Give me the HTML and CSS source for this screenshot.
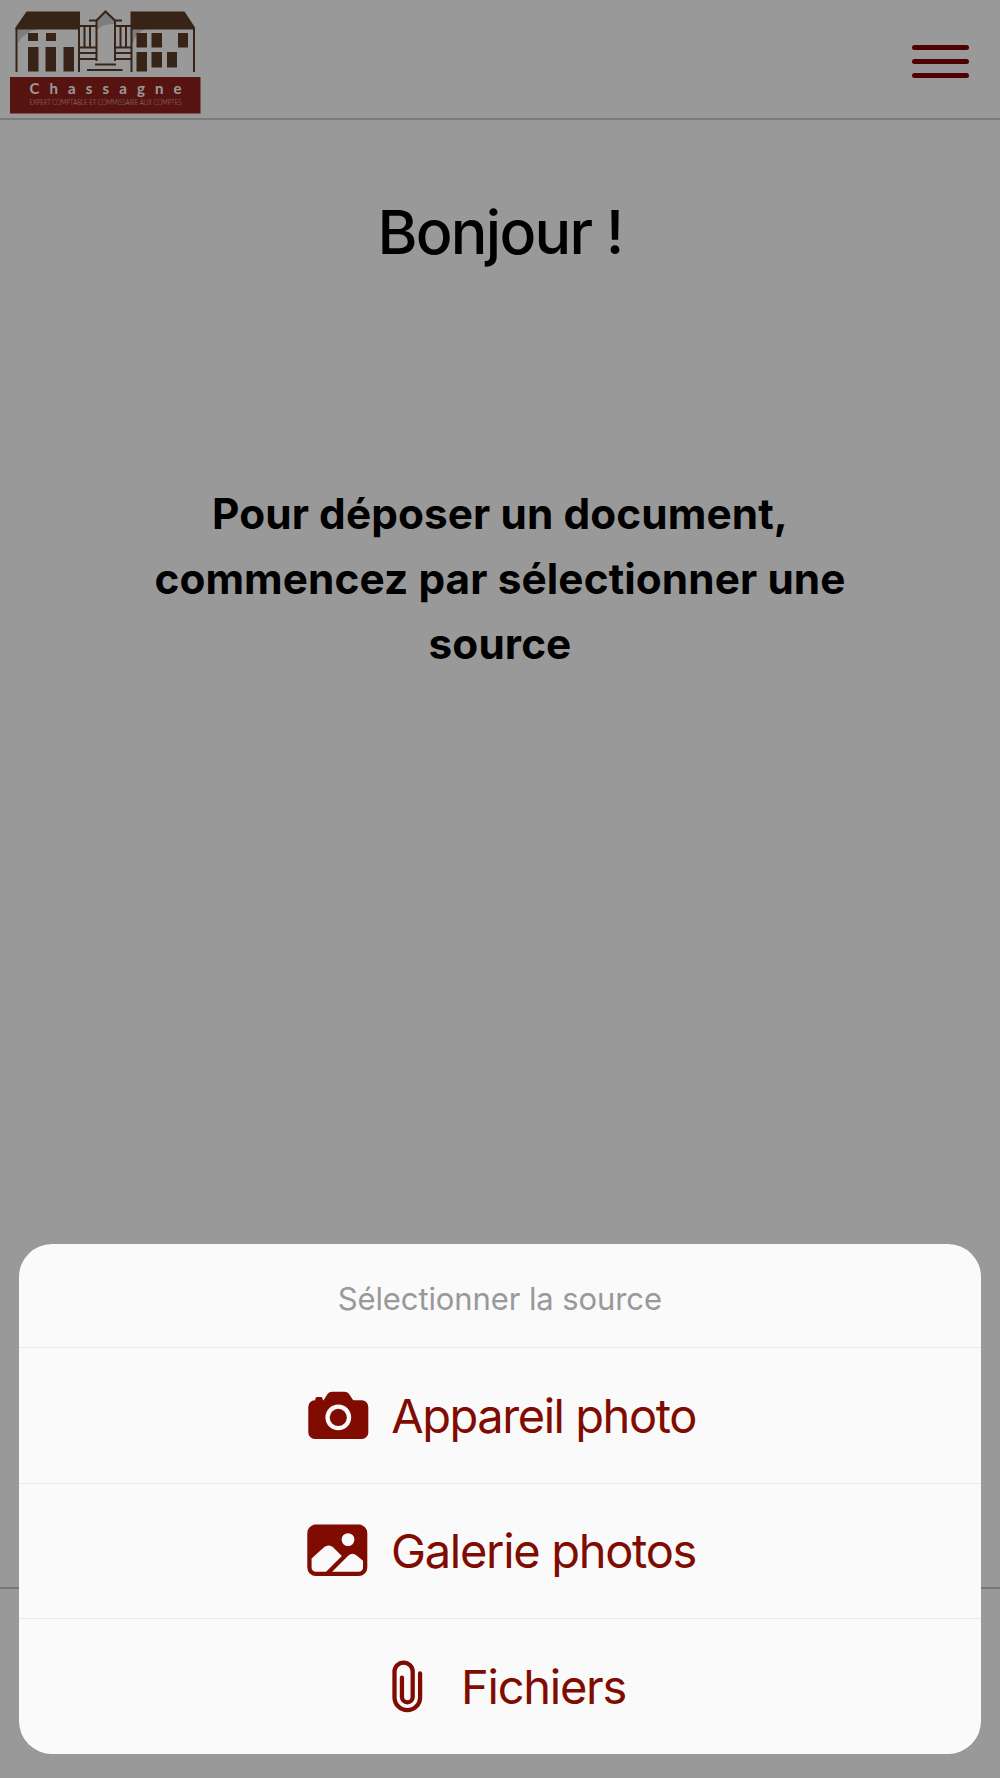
FILE: index.html
```html
<!DOCTYPE html>
<html lang="fr">
<head>
  <meta charset="UTF-8" />
  <meta name="viewport" content="width=device-width, initial-scale=1.0" />
  <title>Chassagne</title>
  <link rel="stylesheet" href="styles.css">
</head>
<body>
  <div class="page">
    <header class="navbar">
      <svg class="logo" width="220" height="118" viewBox="0 0 220 118">
        <!-- shadows -->
        <path class="shade" d="M18 29h20q-14 3-20 14zM97 20l8.500-8 9 9v3q-11-1-17.500 6zM132 29h14q-10 3-14 16z" />
        <!-- roofs -->
        <path class="brown" d="M26.500 11.500H80V29.500H15.500V27.500zM130.500 11.500H184.500L195 27.500V29.500H130.500z" />
        <path class="line" d="M16.500 28V72M79 29V72M131.500 29V72M194 28V72" />
        <!-- windows -->
        <path class="brown" d="M28 33h10v8H28zM46 33h10v8H46zM28 47h10.500v24.500H28zM45.500 47H56v24.500H45.500zM63.500 47H74v24.500H63.500zM136.500 33h10.500v14.500h-10.500zM151.500 33H162v14.500h-10.500zM178 33h10v14.500h-10zM136.500 52h10.500v19.500h-10.500zM151.500 52H162v15.500h-10.500zM167 52h10v15.500h-10z" />
        <!-- tower and stairs -->
        <path class="line" d="M96.500 61V20.500L105.500 11.500L115 20.500V61M89 20.500h7.500M115 20.500h7M80 26h16M115 26h16M84.500 26v21.500M90 26v21.500M120.500 26v21.500M126 26v21.500M80 47.500h16M80 53h16M80 59h16M115 47.500h16M115 53h16M115 59h16M95 64.500h21M87 70h35.500" />
        <rect class="red" x="10" y="77" width="190.500" height="36.500" />
        <text class="logo-name" x="29.500" y="94" textLength="152">Chassagne</text>
        <text class="logo-sub" x="29.500" y="105" textLength="152" lengthAdjust="spacingAndGlyphs">EXPERT COMPTABLE ET COMMISSAIRE AUX COMPTES</text>
      </svg>
      <div class="burger">
        <span></span>
        <span></span>
        <span></span>
      </div>
    </header>

    <main class="content">
      <h1>Bonjour !</h1>
      <p class="intro">Pour déposer un document, commencez par sélectionner une source</p>
    </main>

    <footer class="toolbar"></footer>
  </div>

  <div class="backdrop">
    <div class="sheet">
      <div class="sheet-title">Sélectionner la source</div>
      <div class="sheet-item">
        <svg class="icon" viewBox="0 0 512 512">
          <circle cx="256" cy="272" r="64" />
          <path d="M432 144h-59c-3 0-6.720-1.940-9.620-5l-25.940-40.940a15.520 15.520 0 00-1.370-1.850C327.110 85.760 315 80 302 80h-92c-13 0-25.110 5.760-34.070 16.210a15.520 15.520 0 00-1.370 1.850l-25.940 41c-2.220 2.420-5.340 5-8.620 5v-8a16 16 0 00-16-16h-24a16 16 0 00-16 16v8h-4a48.050 48.050 0 00-48 48V384a48.050 48.050 0 0048 48h352a48.050 48.050 0 0048-48V192a48.050 48.050 0 00-48-48zM256 368a96 96 0 1196-96 96.110 96.110 0 01-96 96z" />
        </svg>
        <span class="label-photo">Appareil photo</span>
      </div>
      <div class="sheet-item">
        <svg class="icon" viewBox="0 0 512 512">
          <path d="M416 64H96a64.070 64.070 0 00-64 64v256a64.070 64.070 0 0064 64h320a64.070 64.070 0 0064-64V128a64.070 64.070 0 00-64-64zm-80 64a48 48 0 11-48 48 48.050 48.050 0 0148-48zM96 416a32 32 0 01-32-32v-67.630l94.840-84.300a48.060 48.060 0 0165.800 1.900l64.950 64.810L172.370 416zm352-32a32 32 0 01-32 32H217.630l121.420-121.420a47.720 47.720 0 0161.640-.160L448 333.840z" />
        </svg>
        <span class="label-gallery">Galerie photos</span>
      </div>
      <div class="sheet-item">
        <svg class="icon icon-stroke" viewBox="0 0 512 512">
          <path d="M216.080 192v143.850a40.080 40.080 0 0080.150 0l.130-188.550a67.940 67.940 0 10-135.870 0v189.820a95.510 95.510 0 10191 0V159.740" />
        </svg>
        <span class="label-files">Fichiers</span>
      </div>
    </div>
  </div>
</body>
</html>
```
FILE: styles.css
```css
* {
  box-sizing: border-box;
}
body {
  margin: 0;
  font-family: Inter, "Liberation Sans", sans-serif;
  background: #fff;
  color: #000;
}
.page {
  display: flex;
  flex-direction: column;
  height: 1778px;
}
.navbar {
  display: flex;
  justify-content: space-between;
  height: 120px;
  border-bottom: 2px solid #cdcdcd;
}
.logo .brown {
  fill: #5d3c25;
}
.logo .line {
  fill: none;
  stroke: #5d3c25;
  stroke-width: 2;
}
.logo .shade {
  fill: #d0d0d0;
}
.logo .red {
  fill: #91211c;
}
.logo-name {
  font-family: Lato, sans-serif;
  font-size: 15px;
  font-weight: 700;
  fill: #fff;
}
.logo-sub {
  font-family: Lato, sans-serif;
  font-size: 7px;
  font-weight: 300;
  fill: #f0c8c4;
}
.burger {
  display: flex;
  flex-direction: column;
  gap: 9px;
  width: 57px;
  margin: 45px 31px 0 0;
}
.burger span {
  height: 5px;
  border-radius: 3px;
  background: #850000;
}
.content {
  flex: 1;
  text-align: center;
}
h1 {
  margin: 75px 0 0;
  font-size: 61px;
  font-weight: 500;
  line-height: 74px;
  letter-spacing: -1.75px;
}
.intro {
  width: 740px;
  margin: 212px auto 0;
  font-size: 42.3px;
  font-weight: 700;
  line-height: 65.2px;
  letter-spacing: 0.1px;
}
.toolbar {
  height: 191px;
  border-top: 2px solid #c8c8c8;
}
.backdrop {
  position: fixed;
  inset: 0;
  display: flex;
  align-items: flex-end;
  padding: 0 19.5px 24px 19px;
  background: rgba(0, 0, 0, 0.4);
}
.sheet {
  width: 100%;
  height: 510px;
  border-radius: 33px;
  background: #fafafa;
}
.sheet-title {
  height: 103px;
  line-height: 109px;
  text-align: center;
  font-size: 31px;
  letter-spacing: -0.1px;
  color: #999;
}
.sheet-item {
  display: flex;
  align-items: center;
  justify-content: center;
  gap: 19px;
  height: 135.5px;
  border-top: 1px solid #e8e8e8;
  font-size: 47px;
  color: #800b00;
}
.label-photo {
  letter-spacing: -1.45px;
}
.label-gallery {
  letter-spacing: -1.3px;
}
.label-files {
  letter-spacing: -1.25px;
}
.icon {
  flex: none;
  width: 68.6px;
  height: 68.6px;
  fill: currentColor;
}
.icon-stroke {
  fill: none;
  stroke: currentColor;
  stroke-width: 32;
  stroke-linecap: round;
  stroke-linejoin: round;
}
```
